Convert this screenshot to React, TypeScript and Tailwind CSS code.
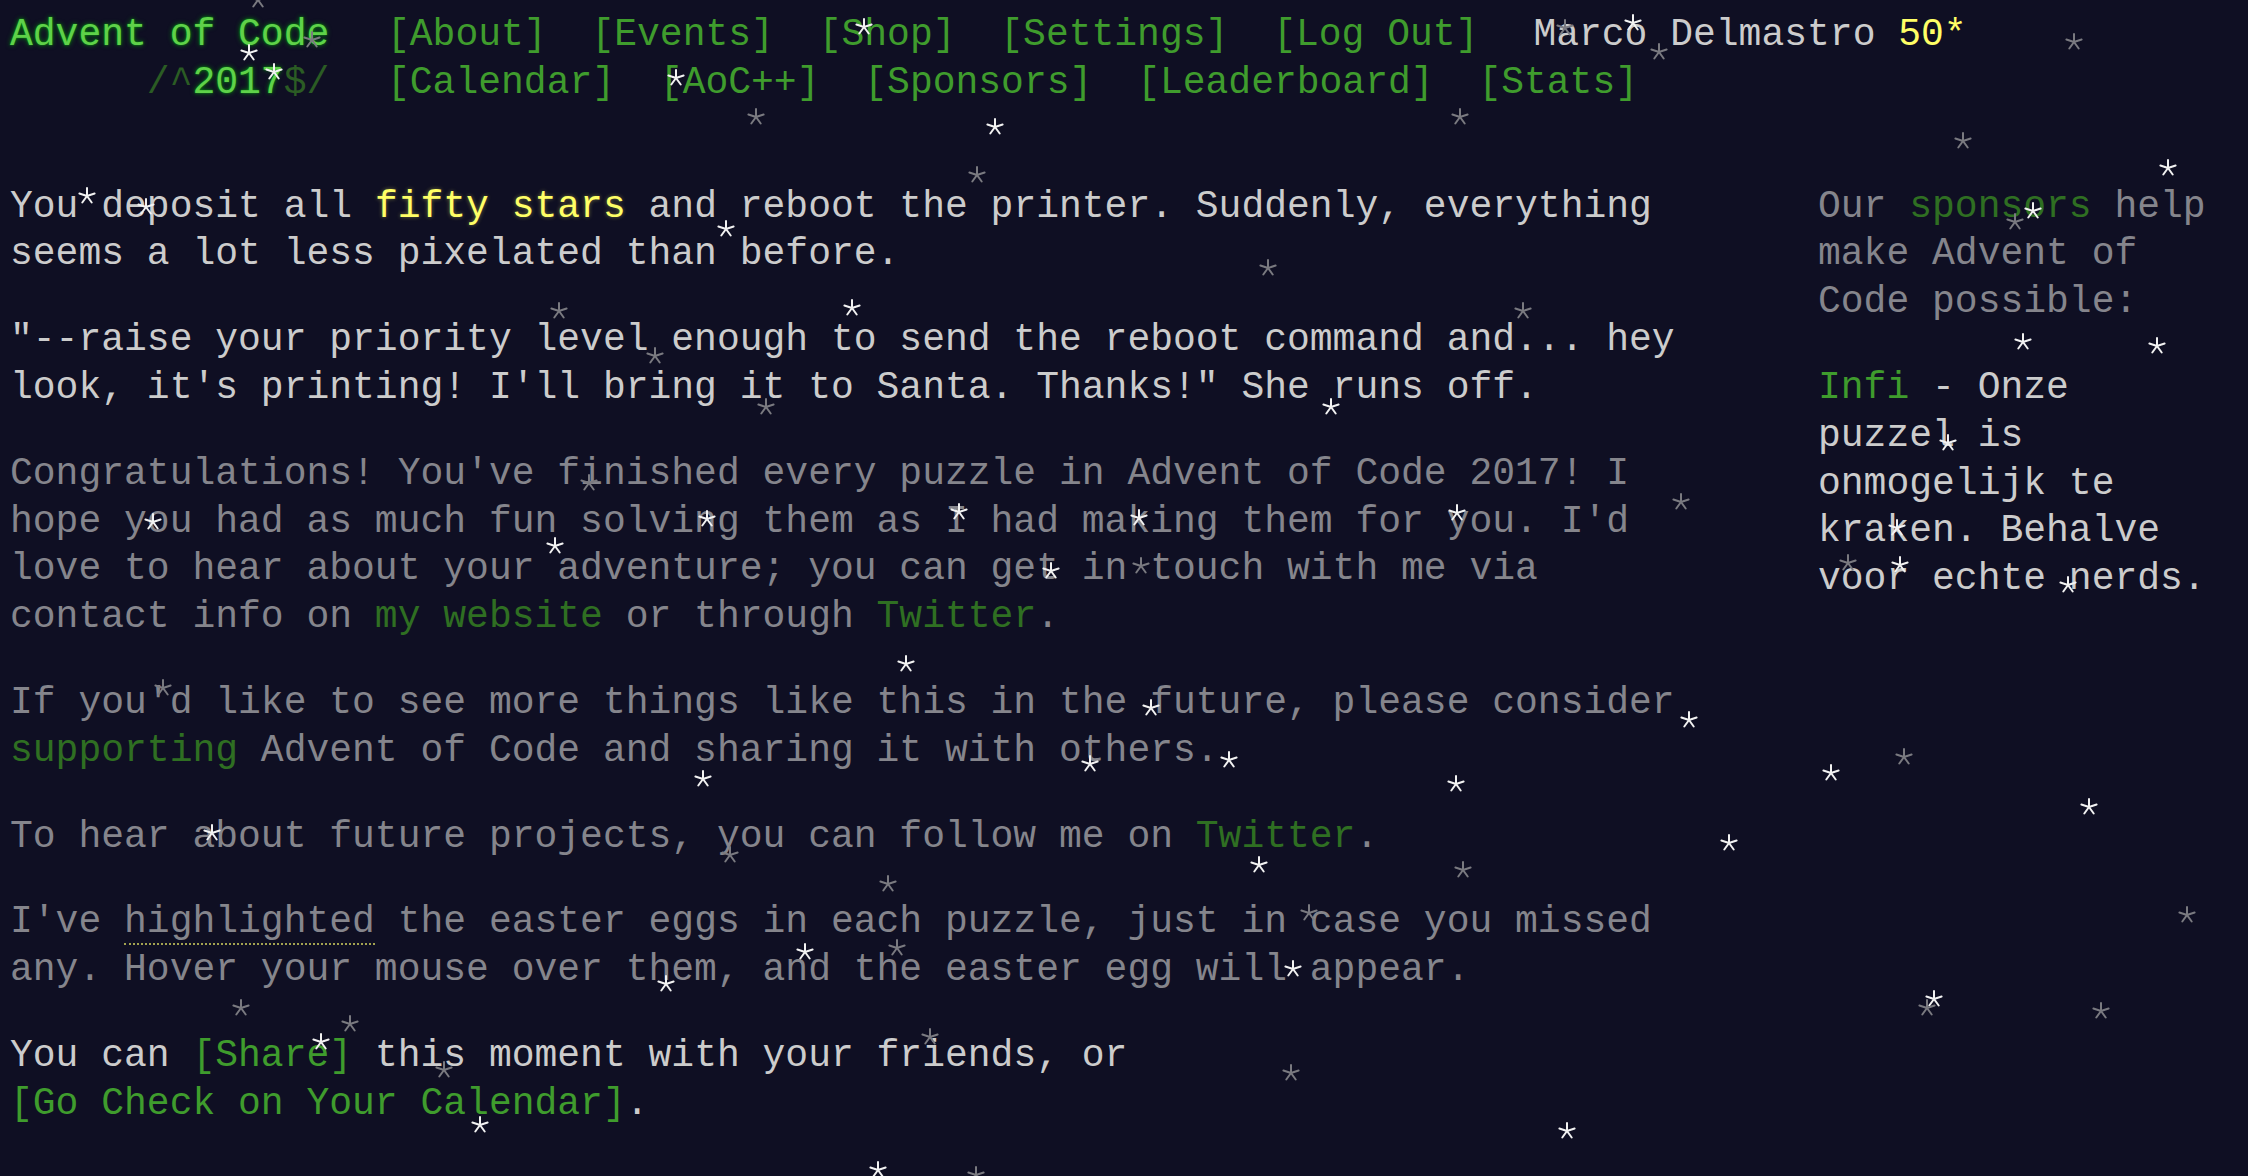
import React from "react";

const stars: [number, number, string][] = [
  [258, 0, "g"], [249, 53, "w"], [312, 40, "g"], [274, 72, "w"], [864, 27, "w"], [676, 78, "w"], [756, 117, "g"], [995, 127, "w"],
  [1565, 28, "g"], [1633, 23, "w"], [1659, 52, "g"], [2074, 42, "g"], [1460, 117, "g"],
  [1963, 141, "g"], [2168, 168, "w"], [2033, 211, "w"], [2015, 222, "g"], [977, 175, "g"],
  [87, 196, "w"], [146, 207, "w"], [726, 229, "w"], [1268, 268, "g"], [559, 311, "g"], [852, 308, "w"], [655, 356, "g"], [1523, 311, "g"],
  [2023, 342, "w"], [2157, 346, "w"], [766, 407, "g"], [1331, 407, "w"], [1681, 502, "g"], [589, 483, "g"], [153, 522, "w"], [707, 519, "w"],
  [959, 512, "w"], [1139, 518, "w"], [1457, 513, "w"], [555, 546, "w"], [1051, 571, "w"], [1141, 566, "g"],
  [1948, 443, "w"], [1897, 528, "w"], [1848, 563, "g"], [1900, 565, "w"], [2068, 585, "w"],
  [906, 664, "w"], [163, 688, "g"], [1151, 708, "w"], [1689, 720, "w"], [1090, 764, "w"], [1229, 760, "w"], [703, 779, "w"], [1456, 784, "w"],
  [1904, 757, "g"], [1831, 773, "w"], [2089, 807, "w"],
  [212, 833, "w"], [730, 855, "g"], [1259, 865, "w"], [1463, 870, "g"], [1729, 843, "w"], [888, 884, "g"], [1309, 913, "g"], [2187, 915, "g"],
  [805, 952, "w"], [897, 948, "g"], [666, 984, "w"], [1293, 969, "w"], [241, 1008, "g"], [350, 1024, "g"], [321, 1042, "w"], [444, 1070, "g"],
  [930, 1037, "g"], [1934, 999, "w"], [1927, 1008, "g"], [2101, 1011, "g"], [1291, 1073, "g"], [480, 1125, "w"], [1567, 1131, "w"],
  [878, 1170, "w"], [976, 1175, "g"],
];

function Star({ x, y, c }: { x: number; y: number; c: string }) {
  const color = c === "w" ? "#f2f2f2" : "#7a7a80";
  const r = 8;
  const arms = [90, 18, -54, -126, 162].map((a) => {
    const rad = (a * Math.PI) / 180;
    return [9 + r * Math.cos(rad), 9 - r * Math.sin(rad)];
  });
  return (
    <svg
      className="absolute"
      style={{ left: x - 9, top: y - 9 }}
      width={18}
      height={18}
      viewBox="0 0 18 18"
    >
      {arms.map(([ax, ay], i) => (
        <line key={i} x1={9} y1={9} x2={ax} y2={ay} stroke={color} strokeWidth={2} strokeLinecap="round" />
      ))}
    </svg>
  );
}

const navRow1 = ["[About]", "[Events]", "[Shop]", "[Settings]", "[Log Out]"];
const navRow2 = ["[Calendar]", "[AoC++]", "[Sponsors]", "[Leaderboard]", "[Stats]"];

export default function App() {
  return (
    <div className="relative min-h-[1176px] overflow-hidden bg-[#0f0f23] px-[10px] pt-[11px] font-['Liberation_Mono',monospace] text-[38px] leading-[47.8px] text-[#cccccc]">
      <header className="flex flex-col">
        <div className="flex whitespace-pre">
          <h1 className="w-[377px] text-[38px] font-normal text-[#5fd14a] [text-shadow:0_0_2px_#00cc0099,0_0_5px_#00cc0099]">
            Advent of Code
          </h1>
          <nav className="flex gap-[44.8px] text-[#3f9c2d]">
            {navRow1.map((n) => (
              <span key={n}>{n}</span>
            ))}
          </nav>
          <div className="ml-[55px] text-[#cccccc]">
            Marco Delmastro <span className="text-[#ffff66]">50*</span>
          </div>
        </div>
        <div className="flex whitespace-pre">
          <h1 className="w-[377px] text-[38px] font-normal">
            {"      "}
            <span className="text-[#2b5c24]">/^</span>
            <span className="text-[#5fd14a] [text-shadow:0_0_2px_#00cc0099,0_0_5px_#00cc0099]">2017</span>
            <span className="text-[#2b5c24]">$/</span>
          </h1>
          <nav className="flex gap-[44.8px] text-[#3f9c2d]">
            {navRow2.map((n) => (
              <span key={n}>{n}</span>
            ))}
          </nav>
        </div>
      </header>

      <div className="mt-[76px] flex">
        <main className="flex w-[1710px] flex-col gap-[38px]">
          <p>
            You deposit all{" "}
            <span className="text-[#ffff66] [text-shadow:0_0_4px_#ffff6666]">fifty stars</span> and reboot the
            printer. Suddenly, everything seems a lot less pixelated than before.
          </p>
          <p>
            "--raise your priority level enough to send the reboot command and... hey look, it's printing! I'll
            bring it to Santa. Thanks!" She runs off.
          </p>
          <p className="text-[#85858c]">
            Congratulations! You've finished every puzzle in Advent of Code 2017! I hope you had as much fun
            solving them as I had making them for you. I'd love to hear about your adventure; you can get in touch
            with me via contact info on <span className="text-[#2f6f22]">my website</span> or through{" "}
            <span className="text-[#2f6f22]">Twitter</span>.
          </p>
          <p className="text-[#85858c]">
            If you'd like to see more things like this in the future, please consider{" "}
            <span className="text-[#2f6f22]">supporting</span> Advent of Code and sharing it with others.
          </p>
          <p className="text-[#85858c]">
            To hear about future projects, you can follow me on <span className="text-[#2f6f22]">Twitter</span>.
          </p>
          <p className="text-[#85858c]">
            I've{" "}
            <span className="border-b-2 border-dotted border-[#a3a350]">highlighted</span> the easter eggs in each
            puzzle, just in case you missed any. Hover your mouse over them, and the easter egg will appear.
          </p>
          <p>
            You can <span className="text-[#3f9c2d]">[Share]</span> this moment with your friends, or{" "}
            <span className="inline-block text-[#3f9c2d]">[Go Check on Your Calendar]</span>.
          </p>
        </main>
        <aside className="ml-auto mr-[20px] flex w-[400px] flex-col gap-[38px]">
          <p className="text-[#85858c]">
            Our <span className="text-[#2f6f22]">sponsors</span> help make Advent of Code possible:
          </p>
          <p>
            <span className="text-[#3f9c2d]">Infi</span> - Onze puzzel is onmogelijk te kraken. Behalve voor
            echte nerds.
          </p>
        </aside>
      </div>

      <div className="pointer-events-none absolute inset-0">
        {stars.map(([x, y, c], i) => (
          <Star key={i} x={x} y={y} c={c} />
        ))}
      </div>
    </div>
  );
}
